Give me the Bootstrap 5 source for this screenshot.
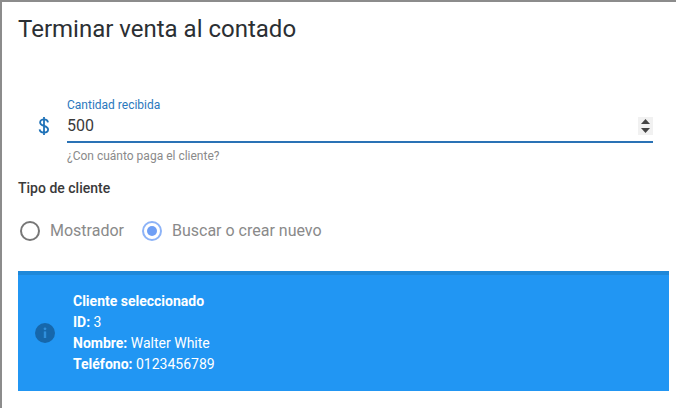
<!DOCTYPE html>
<html lang="es">
<head>
<meta charset="utf-8">
<title>Terminar venta al contado</title>
<link href="https://cdn.jsdelivr.net/npm/bootstrap@5.3.0/dist/css/bootstrap.min.css" rel="stylesheet">
<style>
html,body{height:100%;overflow:hidden}
body{background:#8c8c8c;font-family:Roboto,"Liberation Sans",sans-serif;padding:2px 0 0 2px}
.sheet{background:#fff;height:406px;padding:0 7px 0 16px}
.sheet-title{font-size:24px;font-weight:400;line-height:29px;color:#2b2f33;margin:0;padding-top:13px;height:83px}
.dollar{width:49px;flex:none;padding-left:20px;padding-top:31px;color:#1f72b8}
.dollar svg{display:block}
.amount-col{width:586px;flex:none;position:relative}
.amount-label{font-size:12px;line-height:14px;color:#2a78bd;display:block;padding-top:13px}
.amount-input{display:block;width:100%;border:0;border-bottom:2px solid #2a72b5;border-radius:0;padding:0 0 3px;height:31px;font-size:16px;line-height:20px;color:#3a3a3a;outline:0;background:transparent;-moz-appearance:textfield;appearance:textfield}
.amount-input::-webkit-inner-spin-button,.amount-input::-webkit-outer-spin-button{-webkit-appearance:none;margin:0}
.spinner{position:absolute;right:0;top:32px;width:15px;height:18px;background:#f1f1f1;display:flex;flex-direction:column;align-items:center;justify-content:center;gap:4px}
.amount-help{font-size:12px;line-height:14px;color:#8a8a8a;margin-top:6px}
.type-label{font-size:14px;font-weight:500;line-height:17px;color:#3a3a3a;margin-top:17px}
.radio-row{margin-top:22px;gap:18px;height:24px;padding-left:2px}
.radio-item{gap:10px;font-size:16px;color:#8a8a8a;line-height:24px}
.radio-mark{width:20px;height:20px;border-radius:50%;border:2px solid #777;flex:none;margin:0;background:#fff;appearance:none;display:block}
.radio-mark.is-on{border-color:#8db3f7;background:#fff;position:relative}
.radio-mark.is-on::after{content:"";position:absolute;left:3px;top:3px;width:10px;height:10px;border-radius:50%;background:#6f9ff5}
.client-box{margin-top:28px;height:120px;background:#2196f3;border-top:4px solid #1e88d9;color:#fff;gap:18px;padding-left:17px;font-size:14px;line-height:21px;width:651px}
.client-box b{font-weight:700}
.client-box svg{flex:none}
</style>
</head>
<body>
<div class="sheet">
  <h1 class="sheet-title">Terminar venta al contado</h1>
  <div class="d-flex">
    <div class="dollar">
      <svg width="12" height="20" viewBox="0 0 12 20" aria-hidden="true"><path d="M10 6.4C9.8 4.6 8.2 3.4 6 3.4S2.1 4.6 2.1 6.4c0 4.5 8 2.6 8 7.2 0 1.8-1.8 3-4.1 3s-4.2-1.2-4.4-3.2M6 1v18" fill="none" stroke="#1f72b8" stroke-width="1.8"/></svg>
    </div>
    <div class="amount-col">
      <label class="amount-label" for="cantidad">Cantidad recibida</label>
      <input class="amount-input" id="cantidad" type="number" value="500">
      <div class="spinner" aria-hidden="true">
        <svg width="9" height="5" viewBox="0 0 9 5"><path d="M4.5 0 9 5H0z" fill="#444"/></svg>
        <svg width="9" height="5" viewBox="0 0 9 5"><path d="M0 0h9L4.5 5z" fill="#444"/></svg>
      </div>
      <div class="amount-help">¿Con cuánto paga el cliente?</div>
    </div>
  </div>
  <div class="type-label">Tipo de cliente</div>
  <div class="d-flex align-items-center radio-row">
    <label class="d-flex align-items-center radio-item"><input class="radio-mark" type="radio" name="tipo">Mostrador</label>
    <label class="d-flex align-items-center radio-item"><span class="radio-mark is-on"></span>Buscar o crear nuevo</label>
  </div>
  <div class="d-flex align-items-center client-box">
    <svg width="20" height="20" viewBox="0 0 20 20" aria-hidden="true"><circle cx="10" cy="10" r="10" fill="#1667ab"/><circle cx="10" cy="5.8" r="1.4" fill="#2f8fdc"/><rect x="8.8" y="8.4" width="2.4" height="6.6" fill="#2f8fdc"/></svg>
    <div>
      <div><b>Cliente seleccionado</b></div>
      <div><b>ID:</b> 3</div>
      <div><b>Nombre:</b> Walter White</div>
      <div><b>Teléfono:</b> 0123456789</div>
    </div>
  </div>
</div>
<script src="https://cdn.jsdelivr.net/npm/bootstrap@5.3.0/dist/js/bootstrap.bundle.min.js"></script>
</body>
</html>
